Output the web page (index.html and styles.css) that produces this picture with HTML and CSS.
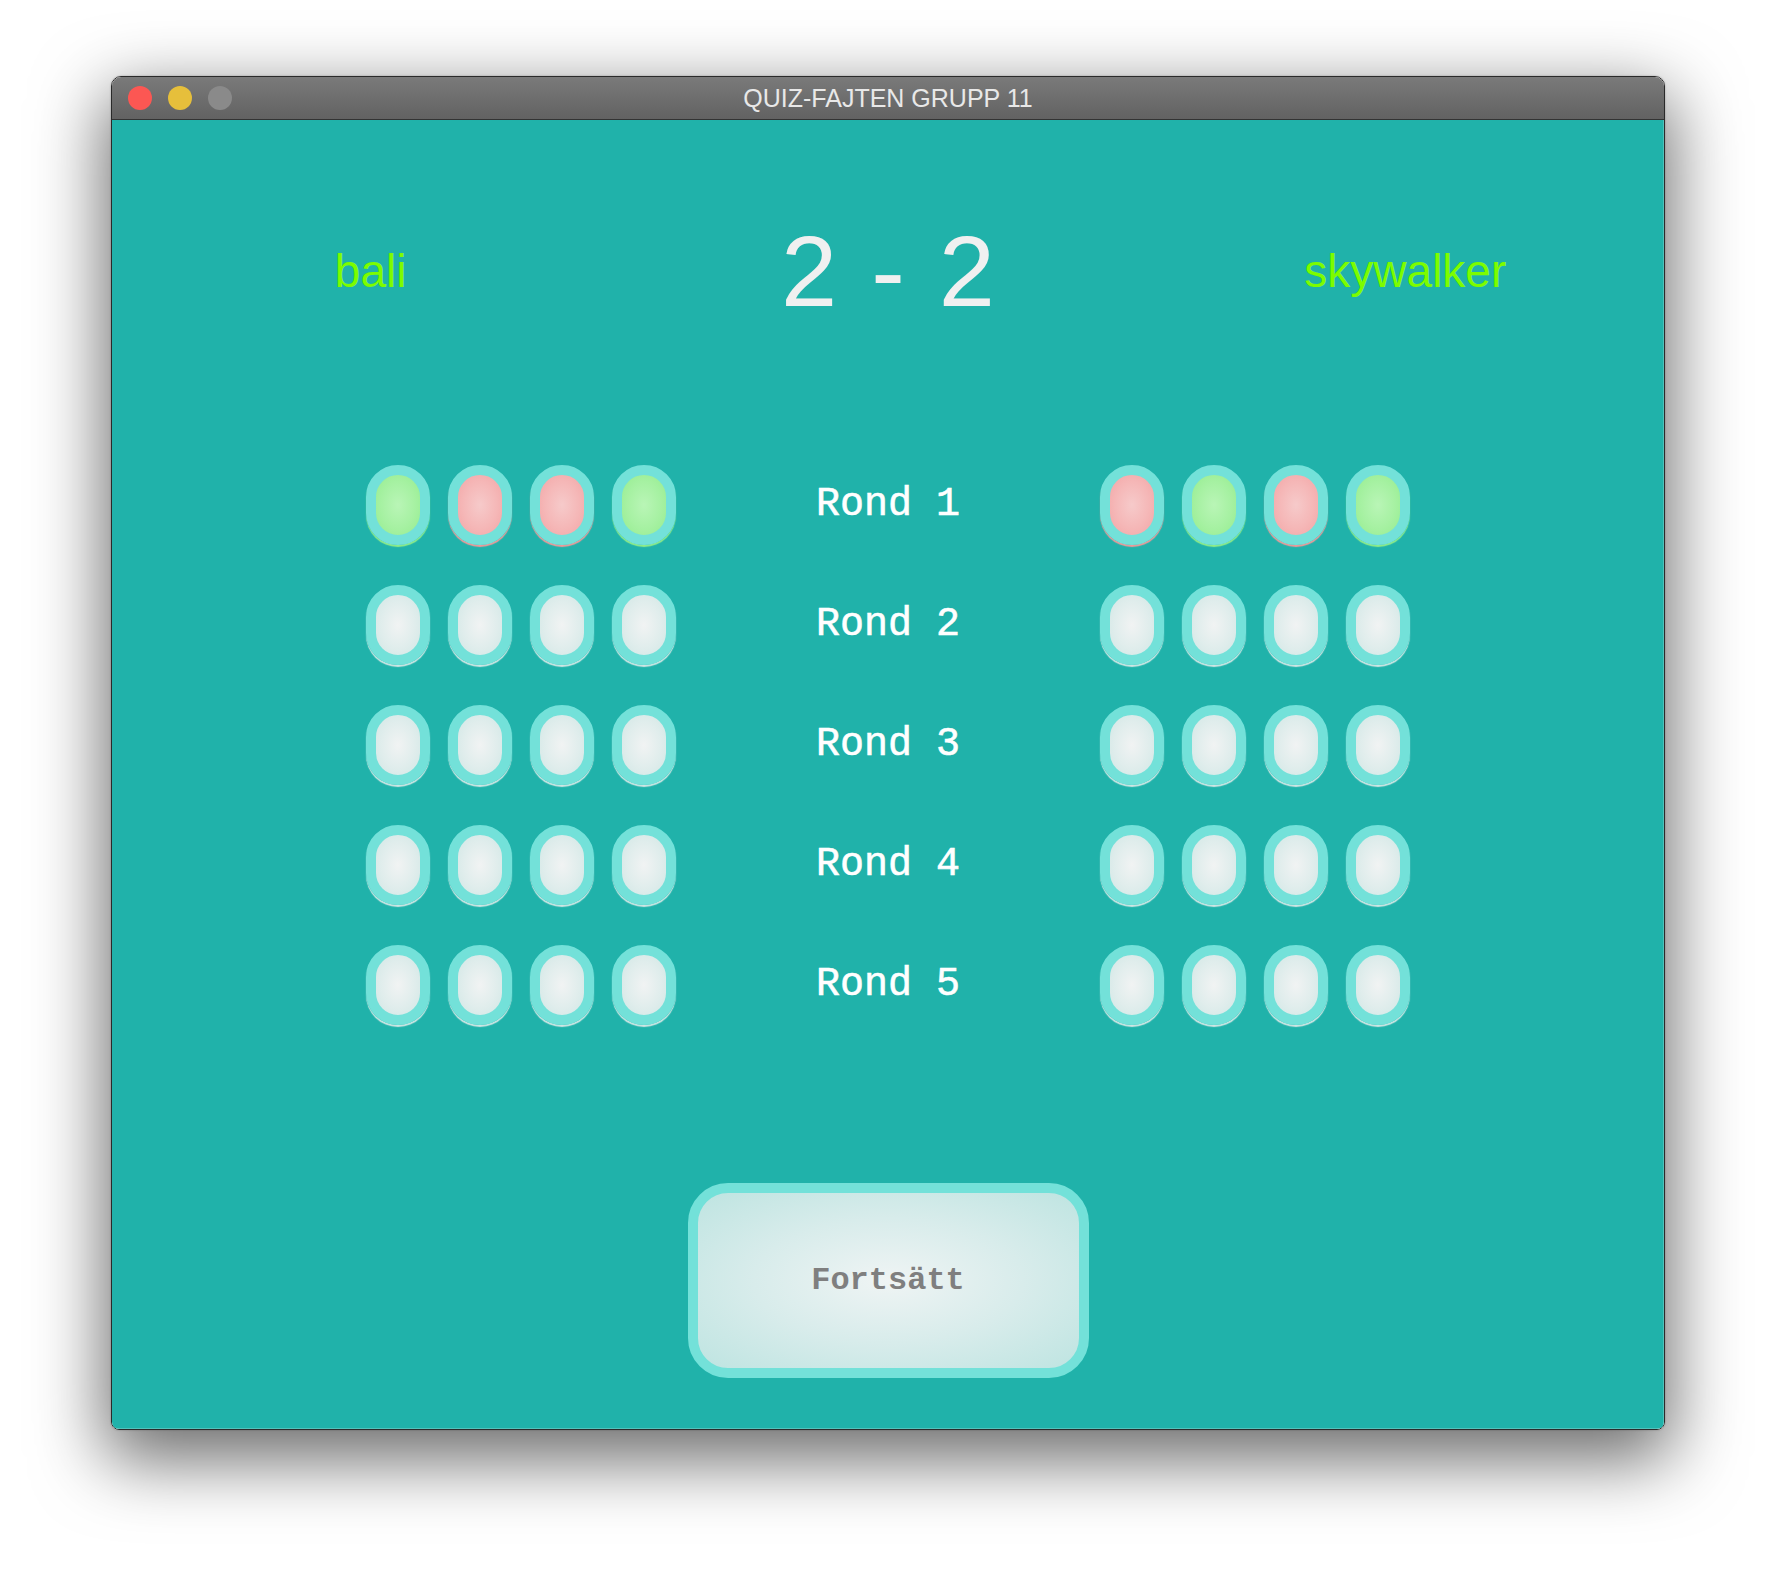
FILE: index.html
```html
<!DOCTYPE html>
<html lang="sv">
<head>
<meta charset="utf-8">
<title>QUIZ-FAJTEN GRUPP 11</title>
<link rel="stylesheet" href="styles.css">
</head>
<body>
<div class="window">
  <div class="titlebar">
    <div class="lights">
      <span class="light red"></span>
      <span class="light yellow"></span>
      <span class="light gray"></span>
    </div>
    <div class="title">QUIZ-FAJTEN GRUPP 11</div>
    <div></div>
  </div>
  <div class="content">
    <div class="header">
      <div class="name">bali</div>
      <div class="score">2 - 2</div>
      <div class="name">skywalker</div>
    </div>
    <div class="rounds">
      <div class="round">
        <div class="dots"><span class="dot right"></span><span class="dot wrong"></span><span class="dot wrong"></span><span class="dot right"></span></div>
        <div class="label">Rond 1</div>
        <div class="dots"><span class="dot wrong"></span><span class="dot right"></span><span class="dot wrong"></span><span class="dot right"></span></div>
      </div>
      <div class="round">
        <div class="dots"><span class="dot"></span><span class="dot"></span><span class="dot"></span><span class="dot"></span></div>
        <div class="label">Rond 2</div>
        <div class="dots"><span class="dot"></span><span class="dot"></span><span class="dot"></span><span class="dot"></span></div>
      </div>
      <div class="round">
        <div class="dots"><span class="dot"></span><span class="dot"></span><span class="dot"></span><span class="dot"></span></div>
        <div class="label">Rond 3</div>
        <div class="dots"><span class="dot"></span><span class="dot"></span><span class="dot"></span><span class="dot"></span></div>
      </div>
      <div class="round">
        <div class="dots"><span class="dot"></span><span class="dot"></span><span class="dot"></span><span class="dot"></span></div>
        <div class="label">Rond 4</div>
        <div class="dots"><span class="dot"></span><span class="dot"></span><span class="dot"></span><span class="dot"></span></div>
      </div>
      <div class="round">
        <div class="dots"><span class="dot"></span><span class="dot"></span><span class="dot"></span><span class="dot"></span></div>
        <div class="label">Rond 5</div>
        <div class="dots"><span class="dot"></span><span class="dot"></span><span class="dot"></span><span class="dot"></span></div>
      </div>
    </div>
    <div class="actions">
      <button class="continue">Fortsätt</button>
    </div>
  </div>
</div>
</body>
</html>
```

FILE: styles.css
```css
html, body {
  margin: 0;
  padding: 0;
}
body {
  background: #ffffff;
  width: 1776px;
  height: 1578px;
  overflow: hidden;
  padding-top: 76px;
  box-sizing: border-box;
}
.window {
  margin-left: 111px;
  width: 1554px;
  height: 1354px;
  box-sizing: border-box;
  border: 1px solid #2a2a2a;
  border-radius: 10px 10px 8px 8px;
  overflow: hidden;
  box-shadow: 0 24px 70px 6px rgba(0, 0, 0, 0.58), 0 0 2px rgba(0,0,0,0.3);
  display: flex;
  flex-direction: column;
}
.titlebar {
  height: 42px;
  border-bottom: 1px solid #333333;
  background: linear-gradient(#7a7a7a, #626262);
  display: grid;
  grid-template-columns: 1fr auto 1fr;
  align-items: center;
  flex: none;
}
.lights {
  display: flex;
  gap: 16px;
  padding-left: 16px;
}
.light {
  width: 24px;
  height: 24px;
  border-radius: 50%;
  display: block;
}
.light.red { background: #fc5753; }
.light.yellow { background: #e6bf3b; }
.light.gray { background: #8a8a8a; }
.title {
  font-family: "Liberation Sans", Arial, sans-serif;
  font-size: 25px;
  color: #e8e8e8;
  line-height: 1;
}
.content {
  flex: 1;
  background: #20b2aa;
  box-shadow: inset -1px -1px 0 rgba(255, 255, 255, 0.22);
  display: flex;
  flex-direction: column;
}
.header {
  margin-top: 91px;
  height: 120px;
  display: grid;
  grid-template-columns: 1fr 1fr 1fr;
  align-items: center;
  justify-items: center;
}
.name {
  font-family: "Liberation Sans", Arial, sans-serif;
  font-size: 46px;
  line-height: 1;
  color: #7cfc00;
}
.score {
  font-family: "Liberation Sans", Arial, sans-serif;
  font-size: 101px;
  line-height: 1;
  color: #f0f0f0;
  word-spacing: 6px;
}
.rounds {
  margin-top: 134px;
  display: flex;
  flex-direction: column;
  gap: 40px;
}
.round {
  display: flex;
  justify-content: center;
  align-items: center;
  height: 80px;
}
.dots {
  width: 310px;
  display: flex;
  gap: 18px;
}
.label {
  width: 424px;
  text-align: center;
  font-family: "Liberation Mono", "Courier New", monospace;
  font-weight: normal;
  font-size: 40px;
  color: #ffffff;
  line-height: 1;
  -webkit-text-stroke: 0.6px #ffffff;
}
.dot {
  display: block;
  width: 44px;
  height: 60px;
  border: 10px solid #73e1d9;
  border-radius: 32px;
  background: radial-gradient(ellipse at center, #f1f3f3 0%, #e0edec 55%, #d0e7e5 100%);
  box-shadow: 0 2px 1px #cfe6e4;
}
.dot.right {
  background: radial-gradient(ellipse at center, #b9f5b6 0%, #a6f1a2 55%, #95ed8f 100%);
  box-shadow: 0 2px 1px #8fec88;
}
.dot.wrong {
  background: radial-gradient(ellipse at center, #f6caca 0%, #f5b7b7 55%, #f3a5a5 100%);
  box-shadow: 0 2px 1px #ee9a9a;
}
.actions {
  margin-top: 158px;
  display: flex;
  justify-content: center;
}
.continue {
  width: 401px;
  height: 195px;
  box-sizing: border-box;
  border: 10px solid #73e1d9;
  border-radius: 40px;
  background: radial-gradient(ellipse at center, #eff4f4 0%, #d8eceb 50%, #bee4e1 100%);
  font-family: "Liberation Mono", "Courier New", monospace;
  font-weight: bold;
  font-size: 32px;
  color: #7f7f7f;
  padding: 0;
  margin: 0;
}
```
